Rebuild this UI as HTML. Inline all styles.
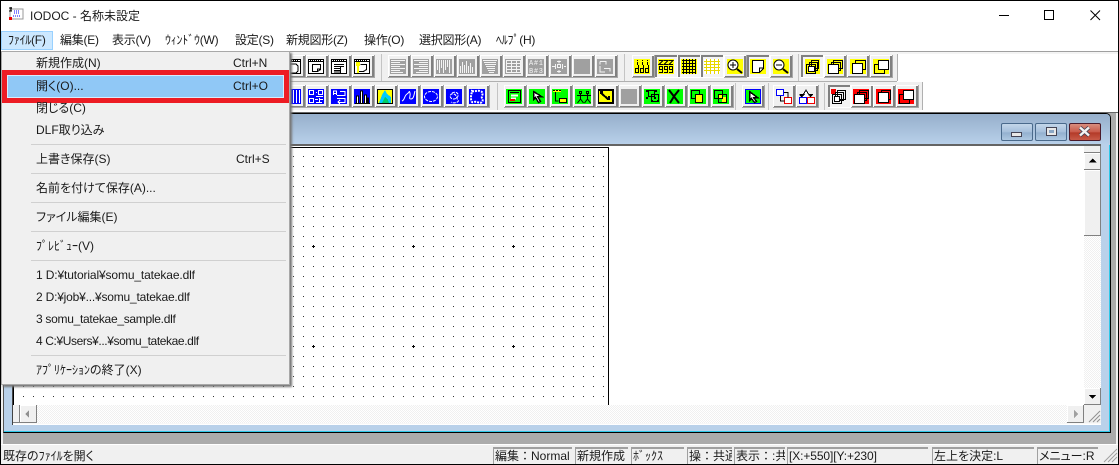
<!DOCTYPE html>
<html lang="ja"><head><meta charset="utf-8"><title>IODOC</title>
<style>
*{box-sizing:border-box}
html,body{margin:0;padding:0}
body{width:1119px;height:465px;position:relative;overflow:hidden;background:#fff;font:12px/16px "Liberation Sans","Noto Sans CJK JP",sans-serif;color:#1a1a1a}
.a{position:absolute;white-space:nowrap}
.m{position:absolute;white-space:nowrap;top:32px;height:16px;letter-spacing:-.25px}
.i{position:absolute;left:36px;white-space:nowrap;height:16px;font-feature-settings:"palt"}
.s{position:absolute;white-space:nowrap;height:16px}
.sep{position:absolute;left:31px;width:255px;height:1px;background:#d0d0d0}
.p{position:absolute;top:447px;height:17px;border-left:1px solid #a0a0a0;border-top:2px solid #a0a0a0;overflow:hidden;white-space:nowrap;padding-left:1px;line-height:15px;background:#f0f0f0}
.mb{position:absolute;top:123px;height:18px;border:1px solid #4a6a8c;border-radius:2px;background:linear-gradient(#c3d6ea,#a5bfdb 50%,#93b0cf 55%,#aec8e2)}
svg{position:absolute;left:0;top:0}
</style></head><body>

<!-- frame -->
<div class="a" style="left:0;top:0;width:1119px;height:465px;border:1px solid #000;z-index:20;pointer-events:none"></div>

<!-- title bar -->
<svg width="40" height="28" style="left:0;top:0" shape-rendering="crispEdges">
<rect x="10" y="9" width="13" height="10" fill="#fff" stroke="#999"/>
<path d="M9 8h3M11 7v4M9 11h3" stroke="#000"/>
<path d="M14 11h6M14 13h6M13 16h8" stroke="#00f" stroke-dasharray="1 1"/>
<rect x="9" y="17" width="3" height="3" fill="#e00"/>
</svg>
<div class="a" style="left:30px;top:8px;font-size:12px">IODOC - 名称未設定</div>
<svg width="120" height="30" style="left:990px;top:0" shape-rendering="crispEdges">
<path d="M9 15.500h10" stroke="#000"/>
<rect x="54.500" y="10.500" width="9" height="9" fill="none" stroke="#000"/>
</svg>
<svg width="20" height="20" style="left:1087px;top:7px"><path d="M3.500 3.500l9.500 9.500M13 3.500l-9.500 9.500" stroke="#000" stroke-width="1"/></svg>

<!-- menu bar -->
<div class="a" style="left:1px;top:31px;width:52px;height:19px;background:#cce8ff;border:1px solid #99d1ff"></div>
<div class="m" style="left:8px">ﾌｧｲﾙ(F)</div>
<div class="m" style="left:60px">編集(E)</div>
<div class="m" style="left:112px">表示(V)</div>
<div class="m" style="left:165px">ｳｨﾝﾄﾞｳ(W)</div>
<div class="m" style="left:235px">設定(S)</div>
<div class="m" style="left:286px">新規図形(Z)</div>
<div class="m" style="left:364px">操作(O)</div>
<div class="m" style="left:419px">選択図形(A)</div>
<div class="m" style="left:496px">ﾍﾙﾌﾟ(H)</div>

<!-- toolbar + icons -->
<svg width="1119" height="115" shape-rendering="crispEdges" style="left:0;top:0" font-family="Liberation Sans, sans-serif">
<defs>
<g id="b"><rect width="23" height="23" fill="#a8a8a8"/><rect x="0" y="0" width="22" height="22" fill="#fff"/><rect x="1" y="1" width="21" height="21" fill="#808080"/><rect x="1" y="1" width="19" height="20" fill="#f0f0f0"/></g>
<g id="p"><rect width="23" height="23" fill="#fff"/><rect x="0" y="0" width="22" height="22" fill="#808080"/><rect x="2" y="2" width="20" height="20" fill="#f4f4f4"/></g>
<g id="w"><rect x=".5" y=".5" width="15" height="14" fill="#fff" stroke="#000"/><path d="M1 2.500h14" stroke="#000"/><path d="M2 1.500h12" stroke="#000" stroke-dasharray="1 1"/></g>
</defs>
<rect x="0" y="51" width="1118" height="1" fill="#a0a0a0"/>
<rect x="0" y="52" width="1118" height="2" fill="#f4f4f4"/>
<rect x="0" y="54" width="897" height="27" fill="#f0f0f0"/>
<rect x="0" y="82" width="923" height="28" fill="#f0f0f0"/>
<path d="M0 81.500h897M897.500 54v27M922.500 82v28" stroke="#b0b0b0"/>
<path d="M381.500 54v27M624.500 54v27M798.500 54v27M497.500 83v27M735.500 83v27M768.500 83v27M824.500 83v27" stroke="#c4c4c4"/>
<rect x="0" y="110" width="1118" height="2" fill="#fff"/>

<!-- row 1 group 1 -->
<use href="#b" x="283" y="55"/><use href="#b" x="306" y="55"/><use href="#b" x="329" y="55"/><use href="#b" x="352" y="55"/>
<g transform="translate(285,59)"><use href="#w"/><path d="M4 5h7l2 2v5l-2 2h-6l-2-3z" fill="none" stroke="#000"/></g>
<g transform="translate(308,59)"><use href="#w"/><path d="M4.500 5.500h8v5l-3 2h-5z" fill="#fff" stroke="#000"/><path d="M9.500 12v-2h3" stroke="#000" fill="none"/></g>
<g transform="translate(331,59)"><use href="#w"/><path d="M3 5.500h10M3 7.500h10M3 9.500h6M3 11.500h6M3 13h6" stroke="#000"/><path d="M9.500 8v6" stroke="#000"/></g>
<g transform="translate(354,59)"><use href="#w"/><path d="M6.500 5.500h6v5l-3 2h-5v-4" fill="#fff" stroke="#000"/><rect x="2" y="3" width="4" height="4" fill="#ff0"/><rect x="3" y="7" width="2" height="7" fill="#ff0"/></g>

<!-- row 1 grey group -->
<g id="gbtns">
<use href="#b" x="388" y="55"/><use href="#b" x="411" y="55"/><use href="#b" x="434" y="55"/><use href="#b" x="457" y="55"/><use href="#b" x="480" y="55"/><use href="#b" x="503" y="55"/><use href="#b" x="526" y="55"/><use href="#b" x="549" y="55"/><use href="#b" x="572" y="55"/><use href="#b" x="595" y="55"/>
<rect x="390" y="59" width="16" height="15" fill="#a0a0a0"/><rect x="413" y="59" width="16" height="15" fill="#a0a0a0"/><rect x="436" y="59" width="16" height="15" fill="#a0a0a0"/><rect x="459" y="59" width="16" height="15" fill="#a0a0a0"/><rect x="482" y="59" width="16" height="15" fill="#a0a0a0"/><rect x="505" y="59" width="16" height="15" fill="#a0a0a0"/><rect x="528" y="59" width="16" height="15" fill="#a0a0a0"/><rect x="551" y="59" width="16" height="15" fill="#a0a0a0"/><rect x="574" y="59" width="16" height="15" fill="#a0a0a0"/><rect x="597" y="59" width="16" height="15" fill="#a0a0a0"/>
</g>
<g stroke="#f4f4f4" fill="none">
<path d="M391 60.500h14M391 62.500h9M391 64.500h14M391 66.500h9M391 68.500h14M391 70.500h9M391 72.500h12"/>
<path d="M414 60.500h14M419 62.500h9M414 64.500h14M419 66.500h9M414 68.500h14M419 70.500h9M416 72.500h12"/>
<path d="M437.500 60v10M439.500 60v13M441.500 60v8M443.500 60v13M445.500 60v10M447.500 60v7M449.500 60v13"/>
<path d="M460.500 66v7M462.500 62v11M464.500 65v8M466.500 61v12M468.500 66v7M470.500 63v10M472.500 67v6"/>
<path d="M483 60.500h14M484 62.500h12M485 64.500h11M486 66.500h9M487 68.500h8M488 70.500h7M489 72.500h5"/>
<path d="M506.500 60.500h14v12h-14zM506 63.500h14M506 66.500h14M506 69.500h14M511.500 60v12M516.500 60v12"/>
<path d="M552 66.500h3M564 66.500h2M559 60.500v3M559 70v3M555.500 64v5M562.500 64v5M557 61.500h4M557 71.500h4" />
<rect x="557.500" y="64.500" width="3" height="3"/>
<path d="M600 61.500h6v3M600 61.500v3M604 68.500h6v3M600 66v6h5"/>
</g>
<text x="529" y="65" font-size="7" fill="#f4f4f4" textLength="14" font-family="Liberation Mono, monospace">A#1</text>
<text x="529" y="73" font-size="7" fill="#f4f4f4" textLength="14" font-family="Liberation Mono, monospace">B#3</text>

<!-- row 1 yellow group -->
<use href="#b" x="632" y="55"/><use href="#p" x="655" y="55"/><use href="#p" x="678" y="55"/><use href="#p" x="701" y="55"/><use href="#b" x="724" y="55"/><use href="#p" x="747" y="55"/><use href="#b" x="770" y="55"/>
<rect x="634" y="59" width="16" height="15" fill="#ff0"/><rect x="658" y="59" width="16" height="15" fill="#ff0"/><rect x="681" y="59" width="16" height="15" fill="#ff0"/><rect x="704" y="59" width="16" height="15" fill="#fff"/><rect x="727" y="59" width="16" height="15" fill="#ff0"/><rect x="750" y="59" width="16" height="15" fill="#ff0"/><rect x="773" y="59" width="16" height="15" fill="#ff0"/>
<path d="M637.500 60v1M637.500 62v3M642.500 60v1M642.500 62v3M647.500 60v1M647.500 62v3" stroke="#000"/>
<path d="M635.500 68.500h3v4h-3zM638.500 65v8M640.500 68.500h3v4h-3zM643.500 65v8M645.500 68.500h3v4h-3zM648.500 65v8" stroke="#000" fill="none"/>
<path d="M659 60.500h4l-4 4h4M664 60.500h4l-4 4h4M669 60.500h4l-4 4h4" stroke="#000" fill="none"/>
<path d="M659.500 66.500h3v3h-3zM662.500 66v7M659 72.500h3M664.500 66.500h3v3h-3zM667.500 66v7M664 72.500h3M669.500 66.500h3v3h-3zM672.500 66v7M669 72.500h3" stroke="#000" fill="none"/>
<path d="M682 60.500h14M682 63.500h14M682 66.500h14M682 69.500h14M682 72.500h14M683.500 59v15M686.500 59v15M689.500 59v15M692.500 59v15M695.500 59v15" stroke="#000"/>
<path d="M704 61.500h16M704 64.500h16M704 67.500h16M704 70.500h16M706.500 59v15M710.500 59v15M714.500 59v15M718.500 59v15" stroke="#e8d800"/>
<circle cx="733" cy="65" r="5" fill="#fff" stroke="#000" shape-rendering="auto"/><path d="M730 65h6M733 62v6" stroke="#000"/><path d="M737 69l5 4" stroke="#000" stroke-width="2" shape-rendering="auto"/>
<path d="M752.500 60.500h11v8l-4 4h-7z" fill="#fff" stroke="#000"/><path d="M759.500 72v-4h4" fill="none" stroke="#000"/>
<circle cx="779" cy="65" r="5" fill="#fff" stroke="#000" shape-rendering="auto"/><path d="M776 65h6" stroke="#000"/><path d="M783 69l5 4" stroke="#000" stroke-width="2" shape-rendering="auto"/>

<!-- row 1 stack group -->
<use href="#p" x="801" y="55"/><use href="#b" x="824" y="55"/><use href="#b" x="847" y="55"/><use href="#b" x="870" y="55"/>
<rect x="805" y="59" width="15" height="15" fill="#ff0"/><rect x="827" y="59" width="16" height="15" fill="#ff0"/><rect x="850" y="59" width="16" height="15" fill="#ff0"/><rect x="873" y="59" width="16" height="15" fill="#ff0"/>
<g fill="none" stroke="#000"><rect x="811.500" y="60.500" width="7" height="8"/><rect x="809.500" y="62.500" width="8" height="8"/></g><rect x="806.500" y="64.500" width="9" height="9" fill="#ff0" fill-opacity="0" stroke="#000"/><rect x="808.500" y="66.500" width="6" height="5" fill="#fff" stroke="#000"/>
<g fill="none" stroke="#000"><rect x="833.500" y="60.500" width="9" height="8"/><rect x="831.500" y="62.500" width="9" height="8"/></g><rect x="828.500" y="64.500" width="10" height="9" fill="#fff" stroke="#000"/>
<rect x="855.500" y="60.500" width="10" height="9" fill="none" stroke="#000"/><rect x="852.500" y="63.500" width="10" height="10" fill="#fff" stroke="#000"/>
<rect x="874.500" y="64.500" width="10" height="9" fill="none" stroke="#000"/><rect x="878.500" y="60.500" width="10" height="9" fill="#fff" stroke="#000"/>

<!-- row 2 blue group -->
<use href="#b" x="283" y="85"/><use href="#b" x="306" y="85"/><use href="#b" x="329" y="85"/><use href="#b" x="352" y="85"/><use href="#b" x="375" y="85"/><use href="#b" x="398" y="85"/><use href="#b" x="421" y="85"/><use href="#b" x="444" y="85"/><use href="#b" x="467" y="85"/>
<rect x="285" y="89" width="16" height="15" fill="#00f"/><rect x="308" y="89" width="16" height="15" fill="#00f"/><rect x="331" y="89" width="16" height="15" fill="#00f"/><rect x="354" y="89" width="16" height="15" fill="#00f"/><rect x="377" y="89" width="16" height="15" fill="#00f"/><rect x="400" y="89" width="16" height="15" fill="#00f"/><rect x="423" y="89" width="16" height="15" fill="#00f"/><rect x="446" y="89" width="16" height="15" fill="#00f"/><rect x="469" y="89" width="16" height="15" fill="#00f"/>
<path d="M287.500 90v13M290.500 90v13M293.500 90v13M296.500 90v13M299.500 90v13" stroke="#fff"/>
<path d="M309.500 90.500h4v4h-4zM318.500 90.500h4v4h-4zM309.500 98.500h4v4h-4zM316 92.500h1M316 96.500h7M315 99.500h3M320 99.500h3M316 102.500h6M319.500 98v4" stroke="#fff" fill="none"/>
<path d="M333.500 95v-4h3v4M333 93.500h4M340 91.500h5v4h-8M337 98.500h8v4h-7M340 100l-2 2 2 2" stroke="#fff" fill="none"/>
<path d="M356.500 103v-7h2v7M360.500 103v-12h2v12M364.500 103v-8h2v8M367.500 103v-5h1v5" stroke="#000" stroke-width="1" fill="#fff"/><path d="M355 103.500h15" stroke="#000"/>
<rect x="377" y="89" width="16" height="15" fill="#000"/><rect x="378" y="90" width="14" height="13" fill="#ff0"/><path d="M379 103l3-8 3-5 2 4 4 3v6z" fill="#0cf"/><path d="M382 103l3-6 3 3 1 3z" fill="#0c6"/>
<g fill="none" stroke="#fff" shape-rendering="auto">
<path d="M402 101c3-1 2-5 5-7s2-4 3-1-2 6 1 6 3-5 4-8"/>
<ellipse cx="431" cy="96.500" rx="6.500" ry="5" stroke-dasharray="3 1"/>
<path d="M452 93c3-2 7 0 6 3s-5 4-7 2 0-5 3-4 2 4 4 6-4 4-7 2" stroke-dasharray="3 1"/>
<path d="M472 91c3 1 5-1 8 0s3 2 2 5 2 4 0 6-5-1-8 0-3-2-3-5 1-4 1-6z" stroke-dasharray="2 1" stroke-width="2"/>
</g>

<!-- row 2 green group -->
<use href="#b" x="504" y="85"/><use href="#b" x="527" y="85"/><use href="#b" x="550" y="85"/><use href="#b" x="573" y="85"/><use href="#b" x="596" y="85"/><use href="#b" x="619" y="85"/><use href="#b" x="642" y="85"/><use href="#b" x="665" y="85"/><use href="#b" x="688" y="85"/><use href="#b" x="711" y="85"/>
<rect x="506" y="89" width="16" height="15" fill="#0f0"/><rect x="529" y="89" width="16" height="15" fill="#0f0"/><rect x="552" y="89" width="16" height="15" fill="#0f0"/><rect x="575" y="89" width="16" height="15" fill="#0f0"/><rect x="598" y="89" width="16" height="15" fill="#0f0"/><rect x="621" y="89" width="16" height="15" fill="#a0a0a0"/><rect x="644" y="89" width="16" height="15" fill="#0f0"/><rect x="667" y="89" width="16" height="15" fill="#0f0"/><rect x="690" y="89" width="16" height="15" fill="#0f0"/><rect x="713" y="89" width="16" height="15" fill="#0f0"/>
<rect x="508.500" y="90.500" width="12" height="12" fill="#0f0" stroke="#000"/><path d="M510 92.500h9" stroke="#000"/><path d="M511 95.500h7M511 98.500h5" stroke="#fff" stroke-width="2"/><rect x="510" y="99" width="5" height="2" fill="#e00"/>
<path d="M533.500 91.500v8l2-2 3 5 2-1-3-5h4z" fill="#fff" stroke="#000" stroke-width="1.500"/>
<rect x="553" y="90" width="8" height="2" fill="#ff0"/><path d="M553 90.500h8" stroke="#000" stroke-dasharray="2 1"/><path d="M555.500 92v9h3" stroke="#000" fill="none"/><rect x="559.500" y="98.500" width="7" height="4" fill="#ff0" stroke="#000"/>
<path d="M579.500 91.500h2v2h-2zM580.500 94v5M577 95.500h7M580.500 99l-3 4M580.500 99l3 4M586.500 91.500h2v2h-2zM587.500 94v5M584 95.500h7M587.500 99l-3 4M587.500 99l3 4" stroke="#000" fill="none" shape-rendering="auto"/>
<rect x="598" y="89" width="16" height="15" fill="#000"/><rect x="599" y="91" width="13" height="11" fill="#ff0"/><path d="M601 93l7 6M603 92h-2v2M607 99h2v-3" stroke="#000" stroke-width="2" fill="none"/>
<rect x="648.500" y="90.500" width="6" height="6" fill="none" stroke="#000"/><rect x="651.500" y="94.500" width="7" height="7" fill="none" stroke="#000"/><path d="M646 90h2v2h-2zM655 90h2v2h-2zM646 97h2v2h-2zM654 97h2v2h-2zM657 100h2v2h-2zM651 100h2v2h-2z" fill="#000"/>
<path d="M669 90l10 13M679 90l-4 5-2 3-3 5" stroke="#000" stroke-width="2" fill="none" shape-rendering="auto"/>
<rect x="691.500" y="90.500" width="8" height="8" fill="none" stroke="#000"/><rect x="695.500" y="94.500" width="7" height="8" fill="#ff0" stroke="#000"/>
<rect x="719" y="95" width="3" height="3" fill="#ff0"/><rect x="722" y="97" width="4" height="5" fill="#ff0"/><rect x="714.500" y="90.500" width="8" height="8" fill="none" stroke="#000"/><rect x="718.500" y="94.500" width="8" height="8" fill="none" stroke="#000"/>

<!-- row 2 single / pair -->
<use href="#b" x="742" y="85"/><rect x="745.500" y="89.500" width="15" height="14" fill="#0f0" stroke="#00f"/><path d="M749.500 91.500v9l2-2 3 4 2-1-3-4h4z" fill="#fff" stroke="#000" stroke-width="1.500"/>
<use href="#b" x="773" y="85"/><use href="#b" x="796" y="85"/>
<rect x="776.500" y="89.500" width="7" height="6" fill="#fff" stroke="#00f"/><rect x="784.500" y="97.500" width="7" height="6" fill="#fff" stroke="#e00"/><path d="M780.500 96v5h4M784 92.500h4v5" fill="none" stroke="#000"/>
<path d="M803 95l3-5 3 5h3l-3 3h-6l-3-3z" fill="#fff" stroke="#000"/><path d="M800 94h5l-2.500 3zM808 94h5l-2.500 3z" fill="#000"/>
<rect x="799.500" y="97.500" width="7" height="6" fill="#fff" stroke="#00f"/><rect x="807.500" y="97.500" width="7" height="6" fill="#fff" stroke="#e00"/>

<!-- row 2 red group -->
<use href="#p" x="828" y="85"/><use href="#b" x="851" y="85"/><use href="#b" x="873" y="85"/><use href="#b" x="896" y="85"/>
<rect x="831" y="89" width="15" height="15" fill="#f4f4f4"/><rect x="831" y="89" width="5" height="5" fill="#e00"/><rect x="853" y="89" width="16" height="15" fill="#f00"/><rect x="876" y="89" width="15" height="15" fill="#f00"/><rect x="898" y="89" width="16" height="15" fill="#f00"/>
<g fill="none" stroke="#000"><rect x="837.500" y="90.500" width="8" height="9"/><rect x="835.500" y="92.500" width="8" height="8"/></g><rect x="832.500" y="94.500" width="9" height="9" fill="none" stroke="#000"/><rect x="834.500" y="96.500" width="5" height="5" fill="#fff" stroke="#000"/>
<g fill="none" stroke="#000"><rect x="859.500" y="90.500" width="9" height="8"/><rect x="857.500" y="92.500" width="9" height="8"/></g><rect x="854.500" y="94.500" width="10" height="9" fill="#fff" stroke="#000"/>
<rect x="881.500" y="90.500" width="9" height="9" fill="none" stroke="#000"/><rect x="878.500" y="92.500" width="10" height="10" fill="#fff" stroke="#000"/>
<rect x="899.500" y="94.500" width="10" height="9" fill="none" stroke="#000"/><rect x="903.500" y="90.500" width="10" height="9" fill="#fff" stroke="#000"/>
</svg>

<!-- MDI workspace -->
<div class="a" style="left:1px;top:112px;width:1117px;height:332px;background:#ababab"></div>
<div class="a" style="left:1px;top:112px;width:1117px;height:1px;background:#666"></div>
<div class="a" style="left:3px;top:113px;width:1108px;height:320px;background:#b9d1ea;border:1px solid #000;border-left-color:#555;border-radius:5px 5px 0 0;box-shadow:inset -1px -1px 0 #2ec8e8"></div>
<div class="a" style="left:4px;top:114px;width:1106px;height:31px;background:linear-gradient(#96afcb,#b9d1ea);border-radius:4px 4px 0 0"></div>
<div class="a" style="left:12px;top:144px;width:1089px;height:2px;background:#646464"></div>
<div class="a" style="left:12px;top:146px;width:1px;height:279px;background:#444"></div>
<div class="a" style="left:13px;top:146px;width:1088px;height:279px;background:#fff"></div>

<!-- MDI buttons -->
<div class="mb" style="left:1001px;width:32px"><div class="a" style="left:9px;top:8px;width:11px;height:5px;background:#e8e8e8;border:1px solid #445"></div></div>
<div class="mb" style="left:1035px;width:32px"><div class="a" style="left:10px;top:3px;width:11px;height:9px;background:#e8e8e8;border:1px solid #445"><div class="a" style="left:2px;top:2px;width:5px;height:3px;background:#8aa6c4"></div></div></div>
<div class="mb" style="left:1069px;width:32px;border-color:#4a1a2a;background:linear-gradient(#d98d7e,#c95a4a 50%,#b33a28 55%,#c85a48)"><svg width="30" height="16" style="left:0;top:0"><path d="M10 3.500l9 8M19 3.500l-9 8" stroke="#445" stroke-width="4"/><path d="M10 3.500l9 8M19 3.500l-9 8" stroke="#f4f4f4" stroke-width="2.400"/></svg></div>

<!-- canvas -->
<svg width="1119" height="465" shape-rendering="crispEdges" style="left:0;top:0">
<defs><pattern id="d" x="0" y="0" width="10" height="10" patternUnits="userSpaceOnUse"><rect x="3" y="6" width="1" height="1" fill="#333"/></pattern>
<pattern id="h" x="0" y="0" width="2" height="2" patternUnits="userSpaceOnUse"><rect width="2" height="2" fill="#fff"/><rect width="1" height="1" fill="#f0f0f0"/><rect x="1" y="1" width="1" height="1" fill="#f0f0f0"/></pattern></defs>
<rect x="14" y="148" width="594" height="257" fill="url(#d)"/>
<path d="M13.500 147v258M13 147.500h596M608.500 147v258" stroke="#000"/>
<path d="M312 246h3v1h-3zM313 245h1v3h-1zM412 246h3v1h-3zM413 245h1v3h-1zM512 246h3v1h-3zM513 245h1v3h-1zM312 346h3v1h-3zM313 345h1v3h-1zM412 346h3v1h-3zM413 345h1v3h-1zM512 346h3v1h-3zM513 345h1v3h-1z" fill="#000"/>
<!-- horizontal scrollbar -->
<rect x="13" y="405" width="1088" height="18" fill="url(#h)"/>
<rect x="13" y="423" width="1088" height="1" fill="#f8f8f8"/>
<rect x="13" y="405" width="7" height="18" fill="#f0f0f0"/><path d="M19.500 405v18M13 422.500h7" stroke="#808080"/>
<rect x="20" y="405" width="17" height="18" fill="#f0f0f0"/><path d="M36.500 405v18M20 422.500h17" stroke="#808080"/><path d="M20.500 405v17M20 405.500h16" stroke="#fff"/><path d="M25 414l4-4v8z" fill="#909090"/>
<rect x="1067" y="405" width="17" height="18" fill="#f0f0f0"/><path d="M1083.500 405v18M1067 422.500h17" stroke="#808080"/><path d="M1067.500 405v17M1067 405.500h16" stroke="#fff"/><path d="M1074 410l4 4-4 4z" fill="#a0a0a0"/>
<!-- corner grip -->
<rect x="1084" y="405" width="17" height="18" fill="#f0f0f0"/>
<path d="M1100 411l-11 11M1100 415l-7 7M1100 419l-3 3" stroke="#909090" shape-rendering="auto"/>
<!-- vertical scrollbar -->
<rect x="1084" y="146" width="17" height="259" fill="url(#h)"/>
<rect x="1084" y="146" width="17" height="7" fill="#f0f0f0"/><path d="M1084 152.500h17M1100.500 146v7" stroke="#808080"/>
<rect x="1084" y="153" width="17" height="17" fill="#f0f0f0"/><path d="M1084 169.500h17M1100.500 153v17" stroke="#808080"/><path d="M1084 153.500h16M1084.500 153v16" stroke="#fff"/><path d="M1092.500 158.500l4 4h-8z" fill="#000"/>
<rect x="1084" y="170" width="17" height="66" fill="#f0f0f0"/><path d="M1084 235.500h17M1100.500 170v66" stroke="#808080"/><path d="M1084 170.500h16M1084.500 170v65" stroke="#fff"/>
<rect x="1084" y="388" width="17" height="17" fill="#f0f0f0"/><path d="M1084 404.500h17M1100.500 388v17" stroke="#808080"/><path d="M1084 388.500h16M1084.500 388v16" stroke="#fff"/><path d="M1089 395h7l-3.500 4z" fill="#000"/>
<!-- side slivers -->
<rect x="1116" y="113" width="2" height="331" fill="#f0f0f0"/>
<rect x="1" y="113" width="2" height="331" fill="#f0f0f0"/>
</svg>

<!-- popup menu -->
<div class="a" style="left:1px;top:51px;width:289px;height:334px;background:#f0f0f0;border:1px solid #a8a8a8;box-shadow:2px 2px 2px #777"></div>
<div class="a" style="left:2px;top:70px;width:287px;height:33px;background:#ed1c24"></div>
<div class="a" style="left:7px;top:75px;width:277px;height:23px;background:#90c8f6;border:1px solid #d8ecfc"></div>

<div class="i" style="top:55px">新規作成(N)</div><div class="s" style="left:233px;top:55px">Ctrl+N</div>
<div class="i" style="top:78px">開く(O)...</div><div class="s" style="left:233px;top:78px">Ctrl+O</div>
<div class="i" style="top:100px">閉じる(C)</div>
<div class="i" style="top:122px">DLF取り込み</div>
<div class="sep" style="top:144px"></div>
<div class="i" style="top:151px">上書き保存(S)</div><div class="s" style="left:236px;top:151px">Ctrl+S</div>
<div class="sep" style="top:173px"></div>
<div class="i" style="top:180px">名前を付けて保存(A)...</div>
<div class="sep" style="top:202px"></div>
<div class="i" style="top:209px">ファイル編集(E)</div>
<div class="sep" style="top:231px"></div>
<div class="i" style="top:238px">ﾌﾟﾚﾋﾞｭｰ(V)</div>
<div class="sep" style="top:260px"></div>
<div class="i" style="top:267px;letter-spacing:-.13px">1 D:¥tutorial¥somu_tatekae.dlf</div>
<div class="i" style="top:289px;letter-spacing:-.2px">2 D:¥job¥...¥somu_tatekae.dlf</div>
<div class="i" style="top:311px;letter-spacing:-.29px">3 somu_tatekae_sample.dlf</div>
<div class="i" style="top:333px;letter-spacing:-.39px">4 C:¥Users¥...¥somu_tatekae.dlf</div>
<div class="sep" style="top:355px"></div>
<div class="i" style="top:362px">ｱﾌﾟﾘｹｰｼｮﾝの終了(X)</div>

<!-- status bar -->
<div class="a" style="left:1px;top:444px;width:1117px;height:20px;background:#f0f0f0;border-top:1px solid #fff"></div>
<div class="a" style="left:3px;top:448px;font-feature-settings:'palt'">既存のﾌｧｲﾙを開く</div>
<div class="p" style="left:493px;width:79px">編集：Normal</div>
<div class="p" style="left:575px;width:53px">新規作成</div>
<div class="p" style="left:631px;width:53px">ﾎﾞｯｸｽ</div>
<div class="p" style="left:687px;width:45px">操：共通</div>
<div class="p" style="left:734px;width:51px">表示：:共通</div>
<div class="p" style="left:787px;width:141px;letter-spacing:-.1px">[X:+550][Y:+230]</div>
<div class="p" style="left:932px;width:102px;font-feature-settings:'palt'">左上を決定:L</div>
<div class="p" style="left:1037px;width:61px;font-feature-settings:'palt'">メニュー:R</div>
<svg width="20" height="20" style="left:1100px;top:444px"><path d="M17 5L4 18M17 9l-9 9M17 13l-5 5" stroke="#a0a0a0"/></svg>
</body></html>
